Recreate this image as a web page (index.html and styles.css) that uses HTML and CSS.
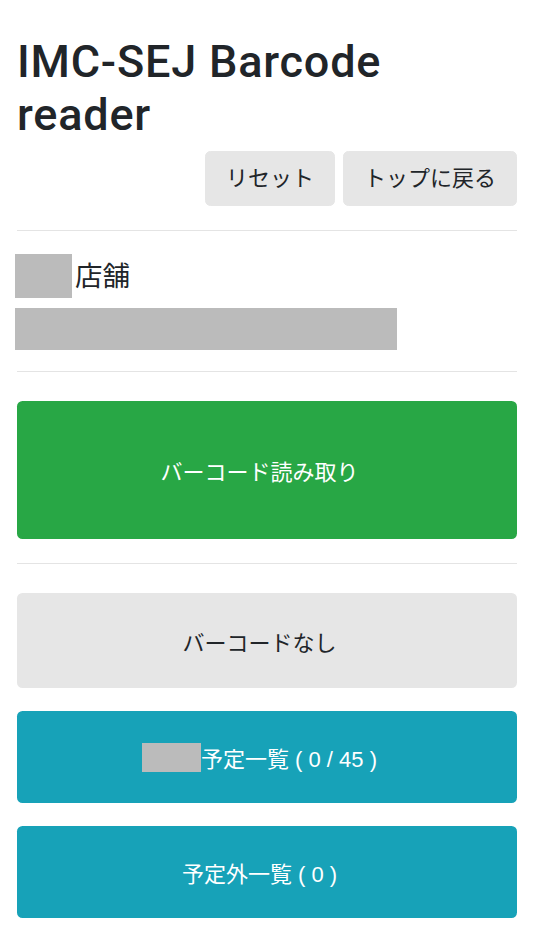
FILE: index.html
```html
<!DOCTYPE html>
<html lang="ja">
<head>
<meta charset="utf-8">
<title>IMC-SEJ Barcode reader</title>
<link rel="stylesheet" href="styles.css">
</head>
<body>
<div class="container">
  <h1 class="title">IMC-SEJ Barcode reader</h1>
  <div class="actions">
    <button class="btn btn-light">リセット</button>
    <button class="btn btn-light">トップに戻る</button>
  </div>
  <hr class="rule rule-top">
  <div class="store">
    <span class="redact redact-name"></span><span class="store-label">店舗</span>
  </div>
  <div class="redact redact-address"></div>
  <hr class="rule rule-mid">
  <button class="big-btn big-green">バーコード読み取り</button>
  <hr class="rule rule-low">
  <button class="big-btn big-gray">バーコードなし</button>
  <button class="big-btn big-teal"><span class="redact redact-inline"></span>予定一覧 ( 0 / 45 )</button>
  <button class="big-btn big-teal">予定外一覧 ( 0 )</button>
</div>
</body>
</html>
```
FILE: styles.css
```css
html, body {
  margin: 0;
  padding: 0;
  background: #ffffff;
}
body {
  font-family: "Liberation Sans", Arial, "Noto Sans CJK JP", sans-serif;
  font-size: 22px;
  color: #212529;
}
.container {
  padding: 35px 17px 0 17px;
}
.title {
  margin: 0;
  font-family: Roboto, "Liberation Sans", sans-serif;
  font-size: 45px;
  line-height: 53px;
  font-weight: 500;
  letter-spacing: 0.8px;
  width: 430px;
}
.actions {
  display: flex;
  justify-content: flex-end;
  gap: 8px;
  margin-top: 10px;
}
.btn {
  font-family: inherit;
  font-size: 22px;
  line-height: 33px;
  padding: 10px 20px;
  border: 1px solid transparent;
  border-radius: 5.5px;
  color: #212529;
  cursor: pointer;
}
.btn-light {
  background: #e6e6e6;
  border-color: #e6e6e6;
}
.rule {
  border: 0;
  border-top: 1px solid #e4e4e4;
  margin: 0;
}
.rule-top {
  margin-top: 24px;
  margin-bottom: 23px;
}
.store {
  display: flex;
  align-items: center;
  margin-left: -2px;
  height: 44px;
}
.redact {
  background: #bbbbbb;
}
.redact-name {
  display: inline-block;
  width: 57px;
  height: 44px;
}
.store-label {
  font-size: 27.5px;
  line-height: 33px;
  font-weight: 400;
  margin-left: 3px;
}
.redact-address {
  margin-top: 10px;
  margin-left: -2px;
  width: 382px;
  height: 42px;
}
.rule-mid {
  margin-top: 21px;
  margin-bottom: 29px;
}
.big-btn {
  display: flex;
  align-items: center;
  justify-content: center;
  width: 100%;
  font-family: inherit;
  font-size: 22px;
  border: 0;
  border-radius: 5.5px;
  padding: 0 15px 0 0;
  cursor: pointer;
}
.big-green {
  height: 138px;
  background: #28a745;
  color: #ffffff;
}
.rule-low {
  margin-top: 24px;
  margin-bottom: 29px;
}
.big-gray {
  height: 95px;
  background: #e6e6e6;
  color: #212529;
}
.big-teal {
  height: 92px;
  background: #17a2b8;
  color: #ffffff;
  margin-top: 23px;
}
.redact-inline {
  display: inline-block;
  width: 59px;
  height: 29px;
}
```
